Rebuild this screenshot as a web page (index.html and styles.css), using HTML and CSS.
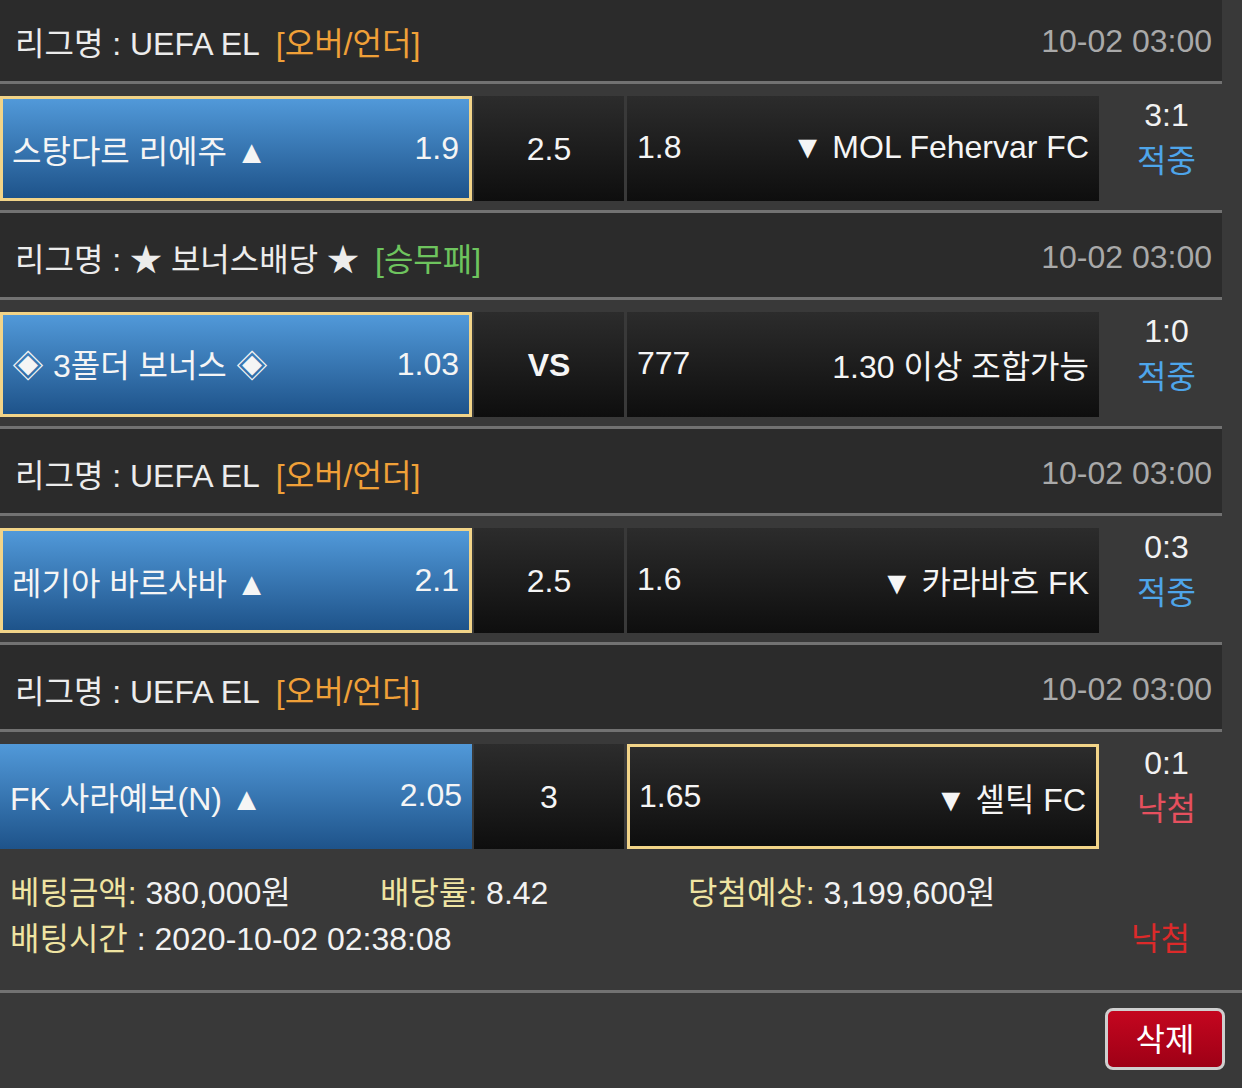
FILE: index.html
```html
<!DOCTYPE html>
<html lang="ko">
<head>
<meta charset="utf-8">
<title>베팅내역</title>
<link rel="stylesheet" href="styles.css">
</head>
<body>
<div class="page">
  <div class="list">
    <div class="game">
      <div class="league">
        <span class="lname">리그명 : UEFA EL</span>
        <span class="type ou">[오버/언더]</span>
        <span class="time">10-02 03:00</span>
      </div>
      <div class="match">
        <div class="cell home sel"><span>스탕다르 리에주 ▲</span><span>1.9</span></div>
        <div class="cell mid">2.5</div>
        <div class="cell away"><span>1.8</span><span>▼ MOL Fehervar FC</span></div>
        <div class="result"><div>3:1</div><div class="hit">적중</div></div>
      </div>
    </div>
    <div class="game">
      <div class="league">
        <span class="lname">리그명 : ★ 보너스배당 ★</span>
        <span class="type wdl">[승무패]</span>
        <span class="time">10-02 03:00</span>
      </div>
      <div class="match">
        <div class="cell home sel"><span>◈ 3폴더 보너스 ◈</span><span>1.03</span></div>
        <div class="cell mid vs">VS</div>
        <div class="cell away"><span>777</span><span>1.30 이상 조합가능</span></div>
        <div class="result"><div>1:0</div><div class="hit">적중</div></div>
      </div>
    </div>
    <div class="game">
      <div class="league">
        <span class="lname">리그명 : UEFA EL</span>
        <span class="type ou">[오버/언더]</span>
        <span class="time">10-02 03:00</span>
      </div>
      <div class="match">
        <div class="cell home sel"><span>레기아 바르샤바 ▲</span><span>2.1</span></div>
        <div class="cell mid">2.5</div>
        <div class="cell away"><span>1.6</span><span>▼ 카라바흐 FK</span></div>
        <div class="result"><div>0:3</div><div class="hit">적중</div></div>
      </div>
    </div>
    <div class="game">
      <div class="league">
        <span class="lname">리그명 : UEFA EL</span>
        <span class="type ou">[오버/언더]</span>
        <span class="time">10-02 03:00</span>
      </div>
      <div class="match">
        <div class="cell home"><span>FK 사라예보(N) ▲</span><span>2.05</span></div>
        <div class="cell mid">3</div>
        <div class="cell away sel"><span>1.65</span><span>▼ 셀틱 FC</span></div>
        <div class="result"><div>0:1</div><div class="miss">낙첨</div></div>
      </div>
    </div>
  </div>
  <div class="summary">
    <div class="sum-line">
      <span class="s1"><span class="lab">베팅금액:</span> 380,000원</span>
      <span class="s2"><span class="lab">배당률:</span> 8.42</span>
      <span class="s3"><span class="lab">당첨예상:</span> 3,199,600원</span>
    </div>
    <div class="sum-line">
      <span class="s-time"><span class="lab">배팅시간</span> : 2020-10-02 02:38:08</span>
      <span class="s-res">낙첨</span>
    </div>
  </div>
  <div class="actions">
    <button class="del">삭제</button>
  </div>
</div>
</body>
</html>
```
FILE: styles.css
```css
html, body {
  margin: 0;
  padding: 0;
  background: #393939;
}
body {
  font-family: "Liberation Sans", "Noto Sans CJK KR", sans-serif;
  font-size: 32px;
  color: #f2f2f2;
  overflow: hidden;
}
.page {
  width: 1242px;
}
.list {
  width: 1222px;
  margin-top: -6px;
}
.league {
  display: flex;
  align-items: center;
  box-sizing: border-box;
  height: 90px;
  padding: 4px 10px 0 15px;
  background: #2b2b2b;
  border-top: 3px solid #727272;
  border-bottom: 3px solid #727272;
  white-space: nowrap;
}
.lname { color: #ececec; }
.type { margin-left: 16px; }
.type.ou { color: #f0a038; }
.type.wdl { color: #6ec45e; }
.time {
  margin-left: auto;
  color: #a9a9a9;
}
.match {
  display: flex;
  align-items: flex-start;
  height: 126px;
  box-sizing: border-box;
  padding-top: 12px;
}
.cell {
  box-sizing: border-box;
  height: 105px;
  display: flex;
  align-items: center;
  justify-content: space-between;
  padding: 0 10px 2px 10px;
  white-space: nowrap;
  color: #f5f5f5;
}
.cell.sel {
  border: 3px solid #f2d488;
  padding: 0 10px 0 9px;
}
.home {
  width: 472px;
  background: linear-gradient(#5199d9, #1e538a);
}
.mid {
  width: 150px;
  margin-left: 2px;
  justify-content: center;
  padding-top: 4px;
  background: linear-gradient(#2c2c2c, #0e0e0e);
}
.mid.vs {
  font-weight: bold;
}
.away {
  width: 472px;
  margin-left: 3px;
  background: linear-gradient(#2c2c2c, #0e0e0e);
}
.result {
  flex: 1;
  padding-left: 12px;
  margin-top: -4px;
  text-align: center;
  line-height: 46px;
  color: #f2f2f2;
}
.hit { color: #4ea5ea; }
.miss { color: #e6505e; }
.summary {
  width: 1222px;
  padding: 12px 0 28px 0;
  line-height: 46px;
}
.sum-line {
  display: flex;
  align-items: center;
  padding-left: 10px;
  white-space: nowrap;
}
.lab { color: #efe4a2; }
.s1 { width: 370px; }
.s2 { width: 308px; }
.s-time { flex: 1; }
.s-res {
  width: 123px;
  text-align: center;
  color: #dc2a2a;
}
.actions {
  border-top: 3px solid #727272;
  display: flex;
  justify-content: flex-end;
  padding: 15px 17px 0 0;
}
.del {
  width: 120px;
  height: 62px;
  box-sizing: border-box;
  border: 3px solid #cfcfcf;
  border-radius: 8px;
  background: linear-gradient(#c4061f, #9e0016);
  color: #ffffff;
  font-family: "Liberation Sans", "Noto Sans CJK KR", sans-serif;
  font-size: 32px;
  padding: 0 0 4px 0;
}
```
